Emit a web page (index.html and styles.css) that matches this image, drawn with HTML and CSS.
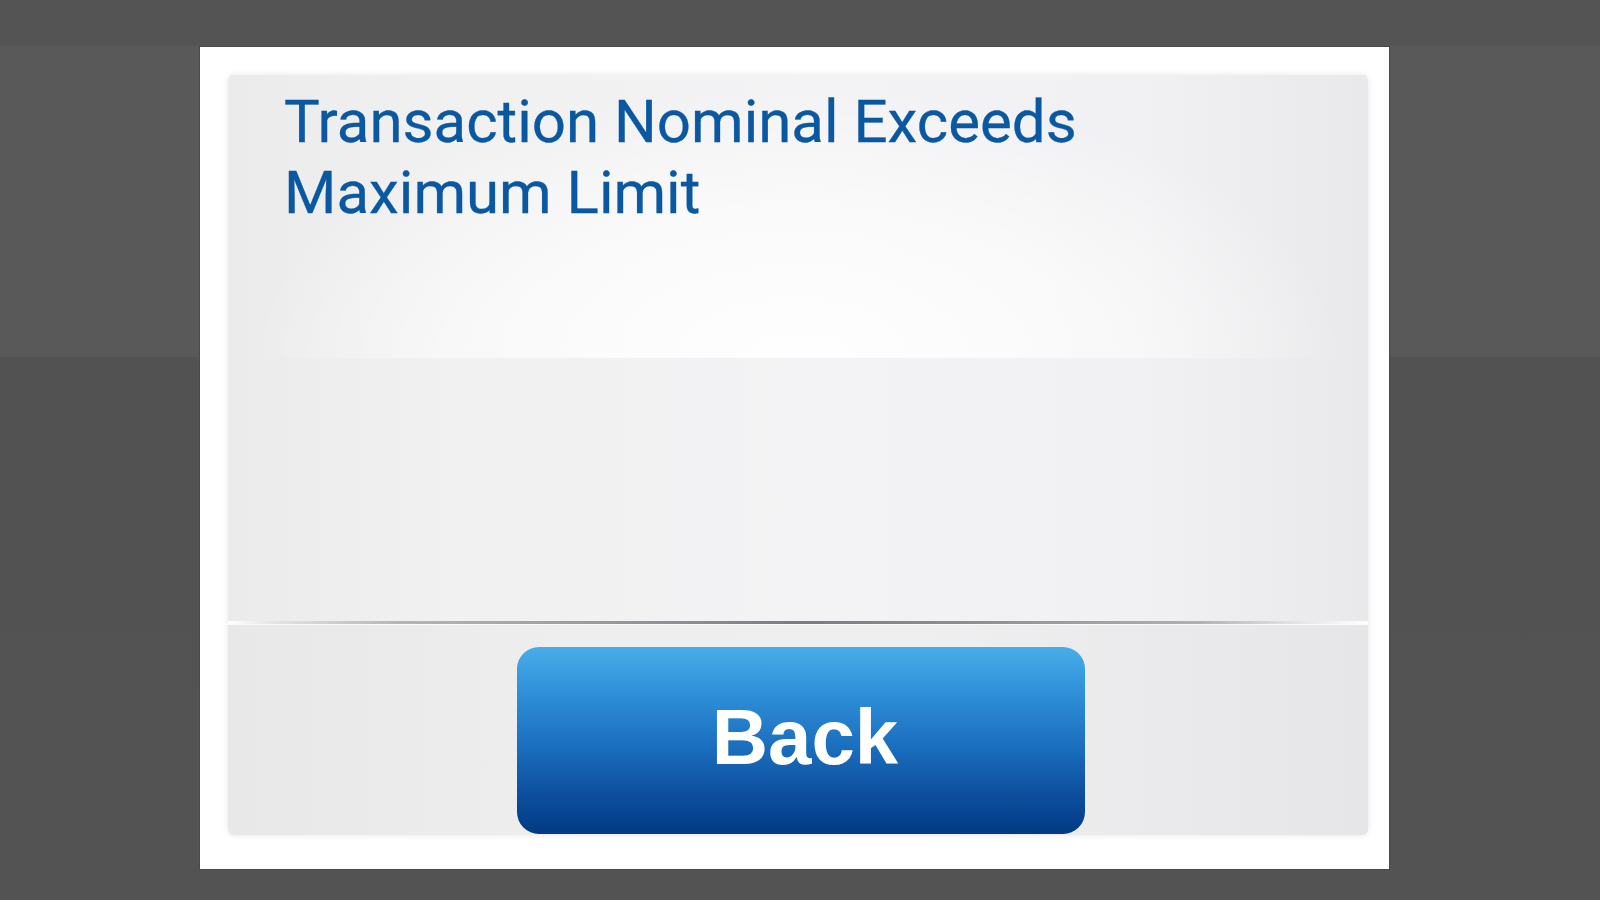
FILE: index.html
```html
<!DOCTYPE html>
<html>
<head>
<meta charset="utf-8">
<link rel="stylesheet" href="styles.css">
</head>
<body>
<div class="stage">
  <div class="frame">
    <div class="card">
      <div class="message">
        <div class="glow"></div>
        <h1 class="title">Transaction Nominal Exceeds<br>Maximum Limit</h1>
      </div>
      <div class="divider"></div>
      <div class="actions">
        <button class="back-btn">Back</button>
      </div>
    </div>
  </div>
</div>
</body>
</html>
```
FILE: styles.css
```css
html, body {
  margin: 0;
  padding: 0;
  width: 1600px;
  height: 900px;
  overflow: hidden;
  background: #535353;
}
.stage {
  width: 1600px;
  height: 900px;
  background:
    linear-gradient(to bottom, #545454 0, #545454 46px, rgba(0,0,0,0) 46px),
    linear-gradient(to bottom, #595959 0, #595959 357px, #525252 357px, #535353 900px);
  padding: 47px 0 0 200px;
  box-sizing: border-box;
}
.frame {
  width: 1189px;
  height: 822px;
  background: #ffffff;
  box-sizing: border-box;
  padding: 28px 21px 34px 28px;
  box-shadow: 0 0 0 1px #4a4a4a;
}
.card {
  width: 1140px;
  height: 760px;
  border-radius: 6px;
  background: #efeff0;
  box-shadow: 0 0 6px rgba(0,0,0,0.10);
  display: flex;
  flex-direction: column;
  overflow: hidden;
}
.message {
  position: relative;
  height: 546px;
  flex: none;
  background: linear-gradient(to right, #ebebeb 0, #f1f1f1 20%, #f3f2f4 50%, #f1f0f2 80%, #e9e8ea 100%);
  overflow: hidden;
}
.glow {
  position: absolute;
  left: 0;
  top: 0;
  width: 1140px;
  height: 283px;
  background:
    radial-gradient(ellipse 60% 120% at 50% 100%, rgba(255,255,255,0.95) 0, rgba(255,255,255,0.6) 45%, rgba(255,255,255,0) 80%);
}
.title {
  position: relative;
  margin: 0;
  padding: 11px 0 0 56px;
  font-family: Roboto, "Noto Sans", sans-serif;
  font-weight: 400;
  font-size: 60px;
  line-height: 71px;
  color: #0a58a1;
  -webkit-text-stroke: 0.3px #0a58a1;
}
.divider {
  height: 3px;
  flex: none;
  background: linear-gradient(to right, rgba(255,255,255,1) 0, #e4e4e6 4%, #b5b5b9 15%, #8d8d95 40%, #7c7c86 50%, #8d8d95 65%, #b0b0b4 85%, #e0e0e2 93%, #ffffff 100%);
  border-bottom: 1px solid #fbfbfb;
}
.actions {
  flex: 1;
  background: linear-gradient(to right, #e8e8e8 0, #eeeeee 30%, #efeff0 60%, #e6e5e8 100%);
  padding-top: 22px;
  box-sizing: border-box;
}
.back-btn {
  display: block;
  margin-left: 289px;
  width: 568px;
  height: 187px;
  border: none;
  border-radius: 22px;
  background: linear-gradient(to bottom, #47ade9 0, #2f8fd8 25%, #1a6cbd 55%, #0c4e9c 80%, #023a83 100%);
  color: #ffffff;
  font-family: "Liberation Sans", Arial, sans-serif;
  font-weight: 700;
  font-size: 78px;
  padding: 0 0 6px 8px;
  cursor: pointer;
}
```
